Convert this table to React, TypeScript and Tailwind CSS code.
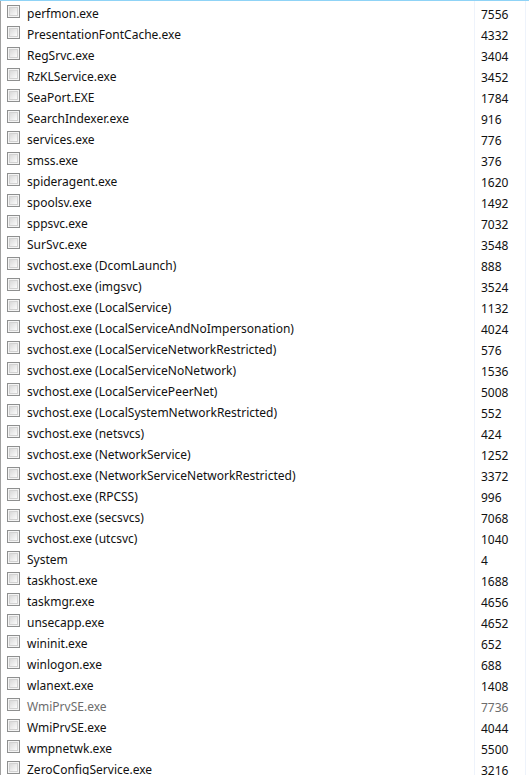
const rows: [string, string, boolean?][] = [
  ['perfmon.exe', '7556'],
  ['PresentationFontCache.exe', '4332'],
  ['RegSrvc.exe', '3404'],
  ['RzKLService.exe', '3452'],
  ['SeaPort.EXE', '1784'],
  ['SearchIndexer.exe', '916'],
  ['services.exe', '776'],
  ['smss.exe', '376'],
  ['spideragent.exe', '1620'],
  ['spoolsv.exe', '1492'],
  ['sppsvc.exe', '7032'],
  ['SurSvc.exe', '3548'],
  ['svchost.exe (DcomLaunch)', '888'],
  ['svchost.exe (imgsvc)', '3524'],
  ['svchost.exe (LocalService)', '1132'],
  ['svchost.exe (LocalServiceAndNoImpersonation)', '4024'],
  ['svchost.exe (LocalServiceNetworkRestricted)', '576'],
  ['svchost.exe (LocalServiceNoNetwork)', '1536'],
  ['svchost.exe (LocalServicePeerNet)', '5008'],
  ['svchost.exe (LocalSystemNetworkRestricted)', '552'],
  ['svchost.exe (netsvcs)', '424'],
  ['svchost.exe (NetworkService)', '1252'],
  ['svchost.exe (NetworkServiceNetworkRestricted)', '3372'],
  ['svchost.exe (RPCSS)', '996'],
  ['svchost.exe (secsvcs)', '7068'],
  ['svchost.exe (utcsvc)', '1040'],
  ['System', '4'],
  ['taskhost.exe', '1688'],
  ['taskmgr.exe', '4656'],
  ['unsecapp.exe', '4652'],
  ['wininit.exe', '652'],
  ['winlogon.exe', '688'],
  ['wlanext.exe', '1408'],
  ['WmiPrvSE.exe', '7736', true],
  ['WmiPrvSE.exe', '4044'],
  ['wmpnetwk.exe', '5500'],
  ['ZeroConfigService.exe', '3216'],
];

function Checkbox() {
  return (
    <span className="block w-[13px] h-[13px] border border-[#8e8f8f] bg-[#f4f4f4] p-[1px]">
      <span className="block w-full h-full border border-[#d2d2d2] bg-gradient-to-br from-[#d9d9d9] to-[#fbfbfb]" />
    </span>
  );
}

export default function App() {
  return (
    <div
      className="w-[529px] h-[775px] overflow-hidden bg-white border-t border-t-[#8fd3f6] text-[12px] text-[#111]"
      style={{ fontFamily: '"Noto Sans", "Liberation Sans", sans-serif' }}
    >
      <div className="flex flex-col border-l border-l-[#a0a0a0] w-[526px] h-full">
        {rows.map(([name, pid, dim], i) => (
          <div key={i} className={`flex h-[21px] shrink-0 ${dim ? 'text-[#6d6d6d]' : ''}`}>
            <div className="w-[473px] flex items-center pl-[6px] gap-[7px]">
              <Checkbox />
              <span className="leading-[21px] pt-[3px]">{name}</span>
            </div>
            <div className="flex-1 border-l border-l-[#eef3fb] border-r border-r-[#eef3fb] pl-[6px] leading-[21px] pt-[3px]">
              {pid}
            </div>
          </div>
        ))}
      </div>
    </div>
  );
}
